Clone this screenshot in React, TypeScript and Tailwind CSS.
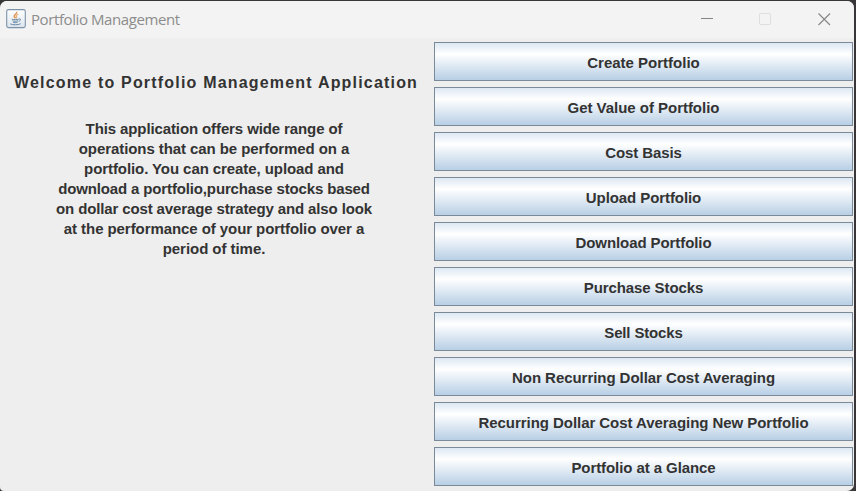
const actions = [
  { label: "Create Portfolio", tracking: "tracking-normal" },
  { label: "Get Value of Portfolio", tracking: "tracking-[-0.03px]" },
  { label: "Cost Basis", tracking: "tracking-[-0.12px]" },
  { label: "Upload Portfolio", tracking: "tracking-[-0.08px]" },
  { label: "Download Portfolio", tracking: "tracking-[-0.08px]" },
  { label: "Purchase Stocks", tracking: "tracking-[-0.1px]" },
  { label: "Sell Stocks", tracking: "tracking-[-0.15px]" },
  { label: "Non Recurring Dollar Cost Averaging", tracking: "tracking-[-0.05px]" },
  { label: "Recurring Dollar Cost Averaging New Portfolio", tracking: "tracking-[-0.05px]" },
  { label: "Portfolio at a Glance", tracking: "tracking-[-0.08px]" },
];

const intro = [
  { text: "This application offers wide range of", tracking: "tracking-[-0.11px]" },
  { text: "operations that can be performed on a", tracking: "tracking-[-0.08px]" },
  { text: "portfolio. You can create, upload and", tracking: "tracking-[-0.08px]" },
  { text: "download a portfolio,purchase stocks based", tracking: "tracking-[-0.14px]" },
  { text: "on dollar cost average strategy and also look", tracking: "tracking-[-0.13px]" },
  { text: "at the performance of your portfolio over a", tracking: "tracking-[-0.07px]" },
  { text: "period of time.", tracking: "tracking-[-0.05px]" },
];

function JavaIcon() {
  return (
    <svg width="20" height="20" viewBox="0 0 20 20" fill="none" className="-mt-0.5 shrink-0">
      <defs>
        <linearGradient id="tile" x1="0" y1="0" x2="0" y2="1">
          <stop offset="0" stopColor="#ffffff" />
          <stop offset="1" stopColor="#dbe5ee" />
        </linearGradient>
      </defs>
      <rect x="0.7" y="0.6" width="18.6" height="18" rx="1.8" fill="url(#tile)" stroke="#7c93a8" strokeWidth="1.1" />
      <path d="M10.6 2.8c1.2 1.8-3 2.8-2.4 4.7.2.8 1 1.2 1.3 1.9" stroke="#e0914c" strokeWidth="1.4" />
      <path d="M12.3 5.2c-2.2.9-2.6 1.7-1.7 2.7.4.5.2 1-.2 1.4" stroke="#e5a870" strokeWidth="1.1" />
      <path d="M5.8 10.2c1.8.6 5.4.6 7 0M6.5 11.8c1.4.6 4.2.6 5.6 0M7.2 13.3c1.2.5 3 .5 4.4 0" stroke="#6686a3" strokeWidth="1" />
      <path d="M12.9 10c2-.6 2.3 1.5-.2 2.4M4.4 14.9c2 1.3 8.2 1.2 10.2-.2" stroke="#6686a3" strokeWidth="1" />
    </svg>
  );
}

export default function App() {
  return (
    <div className="h-[491px] w-[856px] overflow-hidden bg-[#39363a] pt-px pr-0.5">
      <div className="flex h-[490px] w-[854px] flex-col overflow-hidden rounded-t-[7px] rounded-br-[7px] rounded-bl-[4px] bg-[#eeeeee] font-['Liberation_Sans',Arial,sans-serif] text-[#333333]">
        <header className="flex h-[37px] shrink-0 items-center bg-[#f3f3f3]">
          <div className="flex flex-1 items-center gap-[5px] pl-1.5">
            <JavaIcon />
            <span className="-mt-px font-['Open_Sans','Noto_Sans',sans-serif] text-[15px] leading-5 tracking-[-0.41px] text-[#8c8c8c]">Portfolio Management</span>
          </div>
          <div className="flex items-center pr-[23px]">
            <svg width="13" height="13" className="mr-[45px]"><path d="M0 5.5h12" stroke="#858585" /></svg>
            <svg width="13" height="13" fill="none" className="mr-[46px]"><rect x="0.5" y="0.5" width="11" height="11" rx="1" stroke="#dddddd" /></svg>
            <svg width="13" height="13"><path d="M.5.5l11.500 11.500M12 .5L.5 12" stroke="#858585" strokeWidth="1.1" /></svg>
          </div>
        </header>
        <main className="flex flex-1">
          <section className="w-[434px] shrink-0 pt-[35px]">
            <h1 className="pl-3.5 text-base leading-5 font-bold tracking-[1.19px] whitespace-nowrap">
              Welcome to Portfolio Management Application
            </h1>
            <div className="mt-[26px] flex w-[428px] flex-col items-center">
              {intro.map(({ text, tracking }) => (
                <p key={text} className={`text-[15px] leading-5 font-bold whitespace-nowrap ${tracking}`}>{text}</p>
              ))}
            </div>
          </section>
          <nav className="flex w-[419px] flex-col gap-1.5 pt-1">
            {actions.map(({ label, tracking }) => (
              <button key={label} className={`h-[39px] shrink-0 border border-[#7a8a99] bg-linear-to-b from-[#dde8f3] via-white via-30% to-[#b8cfe5] pt-[3px] text-[15px] leading-5 font-bold whitespace-nowrap ${tracking}`}>
                {label}
              </button>
            ))}
          </nav>
        </main>
      </div>
    </div>
  );
}
